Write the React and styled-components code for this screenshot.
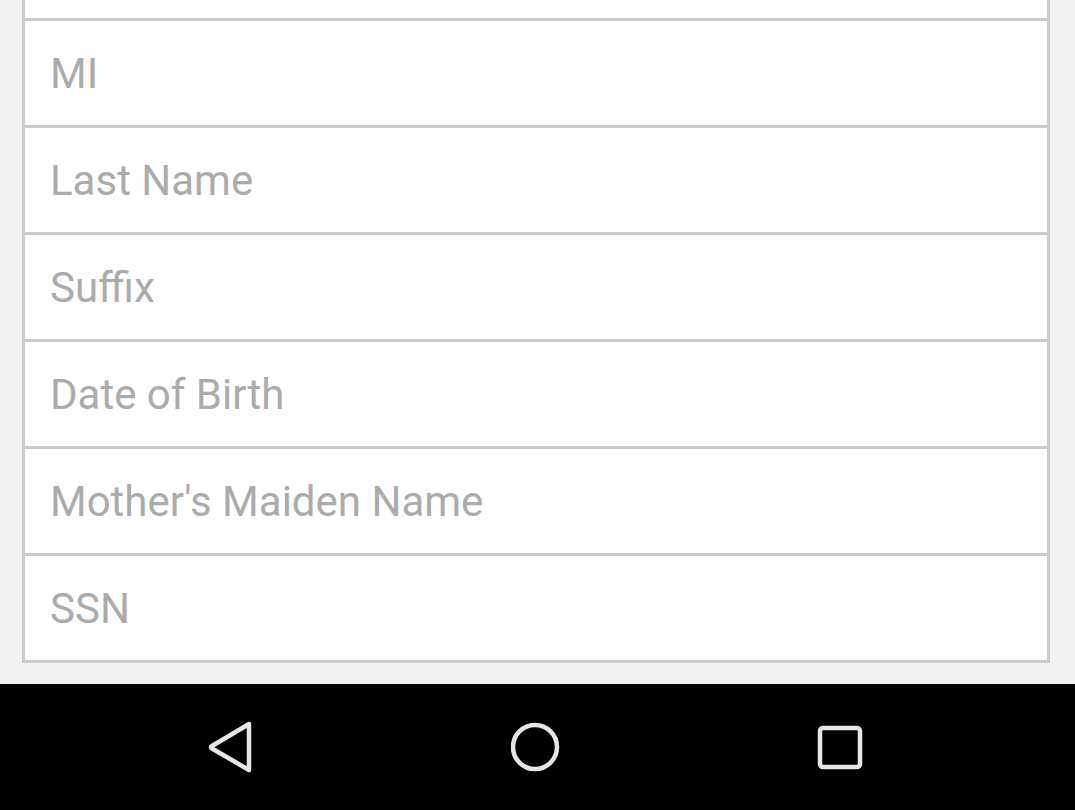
import styled, { createGlobalStyle } from 'styled-components';

const GlobalStyle = createGlobalStyle`
  html, body {
    margin: 0;
    padding: 0;
    background: #f1f1f1;
    font-family: Roboto, "Liberation Sans", sans-serif;
  }
  #root {
    height: 810px;
    overflow: hidden;
  }
`;

const Screen = styled.div`
  display: flex;
  flex-direction: column;
  width: 1075px;
  height: 810px;
`;

const Content = styled.div`
  flex: 1;
  overflow: hidden;
  padding: 0 25px 0 22px;
`;

const Form = styled.div`
  margin-top: -86px;
  background: #ffffff;
  border: 3px solid #cbcbcb;
  border-top: none;
`;

const Field = styled.div`
  display: flex;
  align-items: center;
  height: 104px;
  padding-left: 25px;
  border-bottom: 3px solid #cbcbcb;
  font-size: 42px;
  color: #ababab;

  &:last-child {
    border-bottom: none;
  }
`;

const NavBar = styled.div`
  height: 126px;
  background: #000;
  display: flex;
  align-items: center;
  justify-content: space-between;
  padding: 0 206px 0 204px;
`;

const NavButton = styled.div`
  width: 56px;
  height: 56px;
  display: flex;
  align-items: center;
  justify-content: center;
`;

// the first row is scrolled out of view above the top edge
const fields = [
  '',
  'MI',
  'Last Name',
  'Suffix',
  'Date of Birth',
  "Mother's Maiden Name",
  'SSN',
];

export default function App() {
  return (
    <Screen>
      <GlobalStyle />
      <Content>
        <Form>
          {fields.map((f, i) => (
            <Field key={i}>{f}</Field>
          ))}
        </Form>
      </Content>
      <NavBar>
        <NavButton>
          <svg width="52" height="52" viewBox="0 0 52 52">
            <path
              d="M43 3 L6 25 Q4 26 6 27.5 L43 49 Z"
              fill="none"
              stroke="#e6e6e6"
              strokeWidth="4.5"
              strokeLinejoin="round"
            />
          </svg>
        </NavButton>
        <NavButton>
          <svg width="52" height="52" viewBox="0 0 52 52">
            <circle cx="24" cy="26" r="22" fill="none" stroke="#e6e6e6" strokeWidth="4.5" />
          </svg>
        </NavButton>
        <NavButton>
          <svg width="52" height="52" viewBox="0 0 52 52">
            <rect x="5" y="7" width="40" height="39" rx="3" fill="none" stroke="#e6e6e6" strokeWidth="4.5" />
          </svg>
        </NavButton>
      </NavBar>
    </Screen>
  );
}
